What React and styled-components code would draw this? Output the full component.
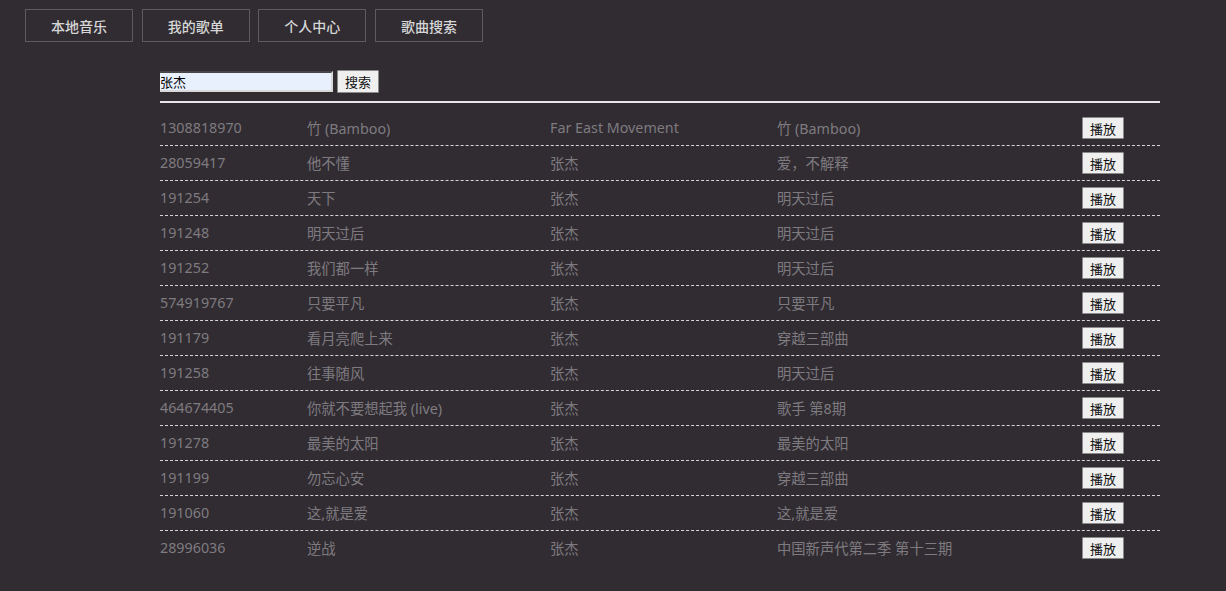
import React from "react";
import styled, { createGlobalStyle } from "styled-components";

const Global = createGlobalStyle`
  html, body { margin: 0; padding: 0; background: #312c32; }
  body { font-family: "Noto Sans", "Noto Sans CJK SC", sans-serif; min-height: 591px; }
`;

const Page = styled.div`
  padding: 9px 25px 20px;
`;

const Nav = styled.nav`
  display: flex;
  gap: 8.67px;
`;

const NavButton = styled.button`
  width: 108px;
  height: 33px;
  background: transparent;
  border: 1px solid #5e5a60;
  color: #d6d6d6;
  font-family: "Noto Sans CJK SC", sans-serif;
  font-size: 14px;
  font-weight: 500;
  padding: 0;
`;

const Main = styled.div`
  width: 1000px;
  margin: 28px 0 0 135px;
`;

const SearchBar = styled.div`
  display: flex;
  align-items: center;
  gap: 4px;
  padding-bottom: 8px;
  border-bottom: 2px solid #e6e6e6;
`;

const SearchInput = styled.input`
  width: 171px;
  height: 17px;
  padding: 0;
  background: #e8f0fe;
  border: 2px inset #9a9a9a;
  border-left: none;
  border-right-color: #d8d8d8;
  border-bottom-color: #d8d8d8;
  font-family: "Noto Sans CJK SC", sans-serif;
  font-size: 13px;
  color: #000;
  outline: none;
`;

const SmallButton = styled.button`
  height: ${(p) => p.$h || 22}px;
  padding: 0 ${(p) => p.$px || 7}px;
  background: #efefef;
  border: 1px solid #8a8a8a;
  border-radius: 1px;
  font-family: "Noto Sans CJK SC", sans-serif;
  font-size: 13px;
  color: #111;
  line-height: 1;
`;

const Table = styled.div`
  margin-top: 8px;
`;

const Row = styled.div`
  display: grid;
  grid-template-columns: 147px 243px 227px 305px 78px;
  align-items: center;
  height: 34px;
  border-bottom: 1px dashed #d6d6d6;
  &:last-child { border-bottom: none; }
`;

const Cell = styled.div`
  color: #7e7b80;
  font-size: 14.3px;
  padding-bottom: 2px;
  white-space: nowrap;
  font-family: "Noto Sans", "Noto Sans CJK SC", sans-serif;
`;

const ButtonCell = styled.div`
  display: flex;
`;

const rows = [
  ["1308818970", "竹 (Bamboo)", "Far East Movement", "竹 (Bamboo)"],
  ["28059417", "他不懂", "张杰", "爱，不解释"],
  ["191254", "天下", "张杰", "明天过后"],
  ["191248", "明天过后", "张杰", "明天过后"],
  ["191252", "我们都一样", "张杰", "明天过后"],
  ["574919767", "只要平凡", "张杰", "只要平凡"],
  ["191179", "看月亮爬上来", "张杰", "穿越三部曲"],
  ["191258", "往事随风", "张杰", "明天过后"],
  ["464674405", "你就不要想起我 (live)", "张杰", "歌手 第8期"],
  ["191278", "最美的太阳", "张杰", "最美的太阳"],
  ["191199", "勿忘心安", "张杰", "穿越三部曲"],
  ["191060", "这,就是爱", "张杰", "这,就是爱"],
  ["28996036", "逆战", "张杰", "中国新声代第二季 第十三期"],
];

export default function App() {
  return (
    <>
      <Global />
      <Page>
        <Nav>
          <NavButton>本地音乐</NavButton>
          <NavButton>我的歌单</NavButton>
          <NavButton>个人中心</NavButton>
          <NavButton>歌曲搜索</NavButton>
        </Nav>
        <Main>
          <SearchBar>
            <SearchInput defaultValue="张杰" />
            <SmallButton $h={23} $px={7}>搜索</SmallButton>
          </SearchBar>
          <Table>
            {rows.map((r) => (
              <Row key={r[0]}>
                <Cell>{r[0]}</Cell>
                <Cell>{r[1]}</Cell>
                <Cell>{r[2]}</Cell>
                <Cell>{r[3]}</Cell>
                <ButtonCell>
                  <SmallButton $h={22}>播放</SmallButton>
                </ButtonCell>
              </Row>
            ))}
          </Table>
        </Main>
      </Page>
    </>
  );
}
